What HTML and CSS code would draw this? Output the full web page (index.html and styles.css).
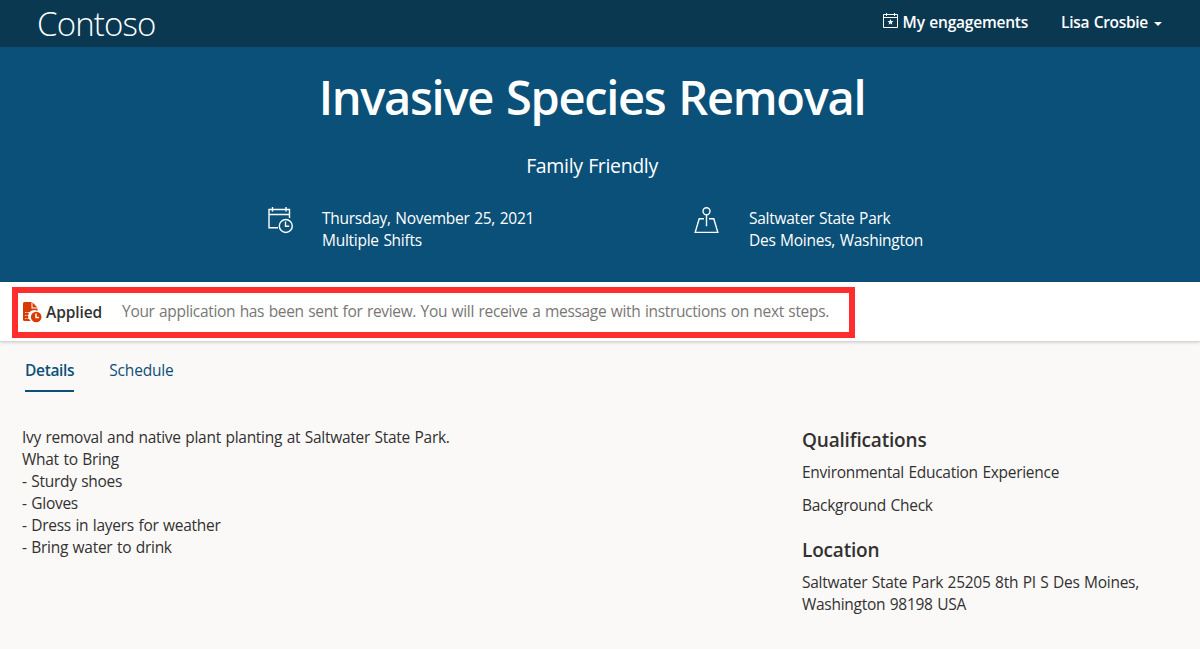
FILE: index.html
```
<!DOCTYPE html>
<html lang="en">
<head>
<meta charset="utf-8">
<title>Invasive Species Removal</title>
<link rel="stylesheet" href="styles.css">
</head>
<body>
<header class="topbar">
  <a class="brand">Contoso</a>
  <nav class="topnav">
    <a class="nav-link engagements">
      <svg class="nav-icon" width="16" height="16" viewBox="0 0 16 16" fill="none" stroke="#fff">
        <path d="M.5 1.500h14v13H.5zM.5 4.500h14M3.500 0v3M11.500 0v3"/>
        <path fill="#fff" stroke="none" d="M7.500 6l.8 2.100 2.200.1-1.700 1.400.6 2.200-1.900-1.200-1.900 1.200.6-2.200-1.700-1.400 2.200-.1z"/>
      </svg>
      <span>My engagements</span>
    </a>
    <a class="nav-link user"><span>Lisa Crosbie</span><i class="caret"></i></a>
  </nav>
</header>
<section class="hero">
  <h1 class="title">Invasive Species Removal</h1>
  <p class="tag">Family Friendly</p>
  <div class="facts">
    <div class="fact">
      <svg class="fact-icon" width="27" height="27" viewBox="0 0 27 27" fill="none" stroke="#fff" stroke-width="1.400">
        <path d="M11 20.800H2V2.500h20.500v8.500M2 7.500h20.500M5.500 0v4.500M19 0v4.500"/>
        <circle cx="18.800" cy="19" r="6.500"/>
        <path d="M18.500 14.500v4.800h3.700"/>
      </svg>
      <p class="fact-text">Thursday, November 25, 2021<br>Multiple Shifts</p>
    </div>
    <div class="fact">
      <svg class="fact-icon" width="27" height="27" viewBox="0 0 27 27" fill="none" stroke="#fff" stroke-width="1.400">
        <circle cx="12.500" cy="4.200" r="3.500"/>
        <path d="M12.500 7.700v11.500M10 11.700H5.200L1.200 25.400h22.600L19.800 11.700H15"/>
      </svg>
      <p class="fact-text">Saltwater State Park<br>Des Moines, Washington</p>
    </div>
  </div>
</section>
<section class="status">
  <div class="status-box">
    <svg class="status-icon" width="19" height="21" viewBox="0 0 19 21">
      <path fill="#d83b01" d="M1.500 0H8.500v6.500h6v2.600a6 6 0 0 0-6.800 9.900H1.500A1.500 1.500 0 0 1 0 17.500V1.500A1.500 1.500 0 0 1 1.500 0zM9.500.3L14.300 5.500H9.500z"/>
      <path stroke="#fff" stroke-opacity=".8" d="M2 10.500h1.500M4.500 10.500h4M2 13.500h1.500M4.500 13.500h2.500M2 16.500h1.500M4.500 16.500H7"/>
      <circle cx="13.200" cy="15" r="5.300" fill="#d83b01"/>
      <path fill="none" stroke="#fff" stroke-width="1.500" d="M13 11.500v4h3"/>
    </svg>
    <strong class="status-name">Applied</strong>
    <span class="status-text">Your application has been sent for review. You will receive a message with instructions on next steps.</span>
  </div>
</section>
<main class="page">
  <nav class="tabs">
    <a class="tab active">Details</a>
    <a class="tab">Schedule</a>
  </nav>
  <div class="columns">
    <div class="description">
      Ivy removal and native plant planting at Saltwater State Park.<br>
      What to Bring<br>
      - Sturdy shoes<br>
      - Gloves<br>
      - Dress in layers for weather<br>
      - Bring water to drink
    </div>
    <aside class="side">
      <h2 class="side-title">Qualifications</h2>
      <p class="side-item">Environmental Education Experience</p>
      <p class="side-item">Background Check</p>
      <h2 class="side-title location">Location</h2>
      <p class="side-item">Saltwater State Park 25205 8th PI S Des Moines,<br>Washington 98198 USA</p>
    </aside>
  </div>
</main>
</body>
</html>
```
FILE: styles.css
```
* { box-sizing: border-box; }
body {
  margin: 0;
  height: 649px;
  overflow: hidden;
  background: #faf9f8;
  color: #323130;
  font: 15.5px/22px "Open Sans", "Noto Sans", sans-serif;
  letter-spacing: -.28px;
  word-spacing: .8px;
}
h1, h2, p { margin: 0; }

.topbar {
  height: 47px;
  padding: 0 38px 0 37px;
  display: flex;
  justify-content: space-between;
  background: #0b3851;
  color: #fff;
}
.brand { font-size: 33px; line-height: 48px; font-weight: 300; letter-spacing: -.85px; }
.topnav { display: flex; gap: 33px; font-weight: 600; line-height: 45px; letter-spacing: -.22px; }
.nav-link { display: flex; }
.nav-icon { margin: 13px 4px 0 0; }
.caret {
  height: 4px;
  margin: 22px 0 0 6px;
  border: 4px solid transparent;
  border-top-color: #fff;
  border-bottom: 0;
}
.user { letter-spacing: -.3px; }

.hero { height: 235px; background: #0a5078; color: #fff; }
.title {
  width: 1184px;
  padding-top: 19px;
  text-align: center;
  font-size: 47px;
  line-height: 62px;
  font-weight: 600;
  letter-spacing: -1.3px;
  word-spacing: 2px;
}
.tag {
  width: 1184px;
  margin-top: 26px;
  text-align: center;
  font-size: 19.5px;
  line-height: 24px;
  letter-spacing: -.35px;
}
.facts { display: grid; grid-template-columns: 427px 427px; padding: 29px 0 0 267px; }
.fact { display: flex; }
.fact-icon { margin-right: 28px; }
.fact-text { letter-spacing: -.26px; }

.status {
  height: 60px;
  padding: 5px 12px;
  background: #fff;
  border-bottom: 1px solid #d6d5d4;
  box-shadow: 0 1px 3px #0002;
}
.status-box {
  width: 843px;
  height: 51px;
  padding: 0 0 2px 5px;
  border: 6px solid #ff2d2d;
  display: flex;
  align-items: center;
}
.status-icon { margin-top: 1px; }
.status-name { font-weight: 600; margin: 1px 20px 0 4px; letter-spacing: -.1px; }
.status-text { color: #797775; margin-top: -1px; white-space: nowrap; letter-spacing: -.33px; }

.page { padding: 17px 22px; }
.tabs { display: flex; gap: 35px; padding-left: 3px; color: #0a5078; }
.tab { height: 33px; letter-spacing: -.2px; }
.active { font-weight: 600; border-bottom: 2px solid #0a5078; letter-spacing: -.33px; }
.columns { display: grid; grid-template-columns: 780px 376px; margin-top: 34px; }
.side { padding-top: 1px; }
.side-title {
  margin-bottom: 8px;
  font-size: 19px;
  line-height: 26px;
  font-weight: 600;
  letter-spacing: -.18px;
}
.side-item { margin-bottom: 11px; }
.location { margin-top: 21px; }
```
